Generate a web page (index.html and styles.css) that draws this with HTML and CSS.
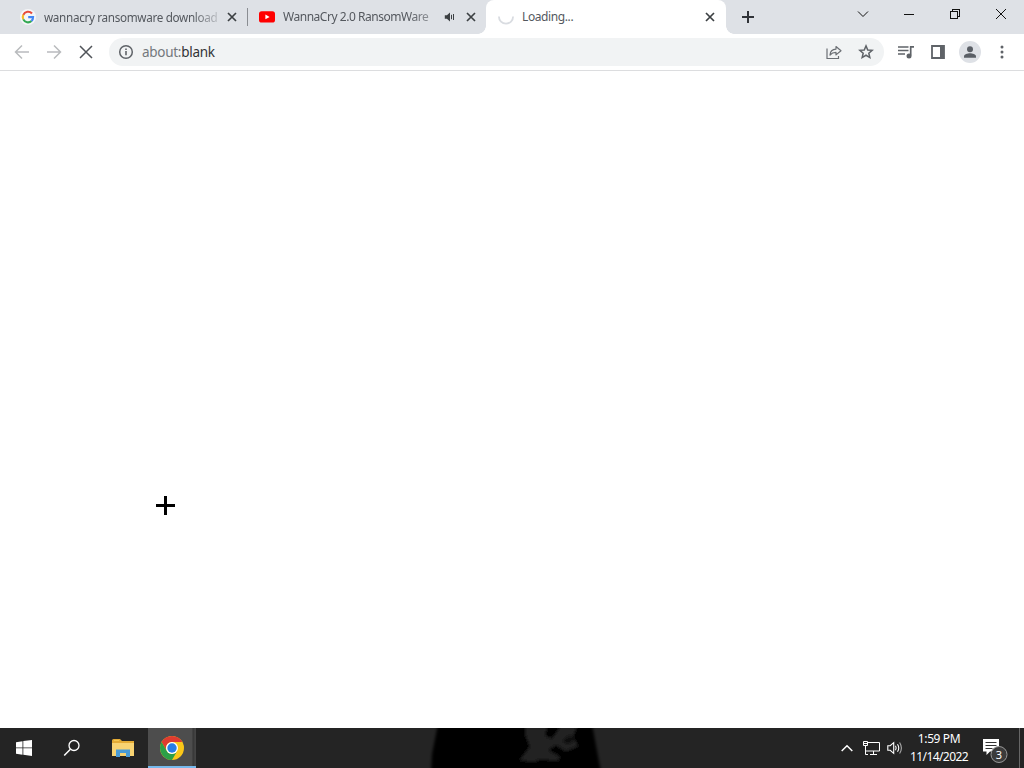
FILE: index.html
```html
<!DOCTYPE html>
<html lang="en">
<head>
<meta charset="utf-8">
<title>about:blank</title>
<link rel="stylesheet" href="styles.css">
</head>
<body>
<div class="desktop">
  <header class="tabstrip">
    <div class="tab">
      <svg class="favicon" viewBox="0 0 16 16"><circle cx="8" cy="8" r="8" fill="#f5f6f8"/><g fill="none" stroke-width="2.1"><path d="M12 4.5A5.2 5.2 0 0 0 3.3 5.8" stroke="#e64a3b"/><path d="M3.3 5.8a5.2 5.2 0 0 0 0 4.6" stroke="#f4b928"/><path d="M3.3 10.4a5.2 5.2 0 0 0 8.2 1.6" stroke="#34a853"/><path d="M11.5 12A5.3 5.3 0 0 0 13.1 8.1H8.2" stroke="#4285f4"/></g></svg>
      <span class="title title-search">wannacry ransomware download</span>
      <svg class="close" viewBox="0 0 10 10"><path d="M1 1l8 8M9 1l-8 8"/></svg>
    </div>
    <div class="tab tab-video">
      <svg class="favicon" viewBox="0 0 16 16"><rect y="2.2" width="16" height="11.4" rx="2.7" fill="#f00"/><path d="M6.4 5.6v4.7l4.2-2.35z" fill="#fff"/></svg>
      <span class="title title-video">WannaCry 2.0 RansomWare</span>
      <svg class="audio" viewBox="0 0 12 12"><path d="M.8 4.2h2.1L6 1.5v9L2.9 7.8H.8z" fill="#3c4043"/><path d="M7.500 3.800v4.400M9.500 3v6" stroke="#3c4043" stroke-width="1" fill="none"/></svg>
      <svg class="close" viewBox="0 0 10 10"><path d="M1 1l8 8M9 1l-8 8"/></svg>
    </div>
    <div class="tab tab-active">
      <svg class="favicon" viewBox="0 0 16 16"><path d="M.9 7.6a7.1 7.1 0 0 0 14.2 0" fill="none" stroke="#d9dce1" stroke-width="1.8"/></svg>
      <span class="title title-loading">Loading...</span>
      <svg class="close" viewBox="0 0 10 10"><path d="M1 1l8 8M9 1l-8 8"/></svg>
    </div>
    <svg class="newtab" viewBox="0 0 14 14"><path d="M7 1v12M1 7h12" stroke="#303338" stroke-width="2"/></svg>
    <div class="controls">
      <svg viewBox="0 0 12 12"><path d="M1 3.500l5 5 5-5"/></svg>
      <svg viewBox="0 0 12 12" shape-rendering="crispEdges"><path d="M1 6.500h10"/></svg>
      <svg viewBox="0 0 12 12" shape-rendering="crispEdges"><path d="M1.500 3.500h7v7h-7zM3.500 3V1.500h7v7H9"/></svg>
      <svg viewBox="0 0 12 12"><path d="M1 1l10 10M11 1L1 11"/></svg>
    </div>
  </header>
  <nav class="toolbar">
    <svg class="nav nav-off" viewBox="0 0 16 16"><path d="M15 8H1.800M8 1.500L1.500 8 8 14.500"/></svg>
    <svg class="nav nav-off" viewBox="0 0 16 16"><path d="M1 8h13.200M8 1.500L14.500 8 8 14.500"/></svg>
    <svg class="nav" viewBox="0 0 16 16"><path d="M2 2l12 12M14 2L2 14"/></svg>
    <div class="omnibox">
      <svg class="info" viewBox="0 0 16 16"><circle cx="8" cy="8" r="6.300" fill="none" stroke="#5f6368" stroke-width="1.500"/><path d="M8 7.100v4.200M8 4.400v1.600" stroke="#5f6368" stroke-width="1.600"/></svg>
      <span class="url"><span class="scheme">about:</span>blank</span>
      <svg class="tool share" viewBox="0 0 16 16"><g fill="none" stroke="#6b6f74" stroke-width="1.200"><path d="M1 4.500v10h11.500V12"/><path d="M4 11c.2-4 2.200-5.800 6-5.900V2.500l5 4.200-5 4.200V8.400C7.300 8.400 5.500 9.200 4 11z" stroke-linejoin="round"/></g></svg>
      <svg class="tool" viewBox="0 0 16 16"><path d="M8 1.900l1.750 4.050 4.400.4-3.330 2.900 1 4.300L8 11.250l-3.820 2.300 1-4.300L1.850 6.350l4.400-.4z" fill="none" stroke="#5f6368" stroke-width="1.500"/></svg>
    </div>
    <svg class="media" viewBox="0 0 18 16"><path d="M1 3h10.500M1 6.500h10.500M1 10h7" stroke="#5f6368" stroke-width="1.600"/><path d="M13.700 11.500V2.800h3.300" fill="none" stroke="#5f6368" stroke-width="1.700"/><circle cx="12" cy="12" r="2.500" fill="#5f6368"/></svg>
    <svg class="panel" viewBox="0 0 14 14"><path d="M1 1h12v12H1z" fill="none" stroke="#5f6368" stroke-width="1.800"/><path d="M9 1h4v12H9z" fill="#5f6368"/></svg>
    <svg class="avatar" viewBox="0 0 22 22"><circle cx="11" cy="11" r="11" fill="#dee1e6"/><circle cx="11" cy="8.200" r="3" fill="#5a5f66"/><path d="M5 16.700v-1.500c0-2 3.600-3 6-3s6 1 6 3v1.500z" fill="#5a5f66"/></svg>
    <svg class="menu" viewBox="0 0 4 16"><g fill="#5f6368"><circle cx="2" cy="3" r="1.500"/><circle cx="2" cy="8" r="1.500"/><circle cx="2" cy="13" r="1.500"/></g></svg>
  </nav>
  <main class="page"></main>
  <footer class="taskbar">
    <svg class="wallpaper" viewBox="0 0 1024 40" aria-hidden="true"><defs><filter id="soft" x="-5%" y="-20%" width="110%" height="140%"><feGaussianBlur stdDeviation="1.500"/></filter></defs><g filter="url(#soft)"><path d="M438-4H592l9 48H431l1-18z" fill="#060606"/><path d="M525-2h22l-2 10 7 3 9-13h16l-4 10 5 10-12 5-10-6-8 5 12 7-3 4-17-2-6 3-14-2 10-13-4-11z" fill="#202020"/><path d="M562 13l8-6 5 5-7 4z" fill="#080808"/></g></svg>
    <div class="launch">
      <svg class="windows" viewBox="0 0 16 16" fill="#fff"><path d="M0 2.200l6.500-1v6.300H0zM7.300 1.100L16 0v7.500H7.300zM0 8.300h6.500v6.400L0 13.800zM7.300 8.300H16V16l-8.700-1.200z"/></svg>
    </div>
    <div class="launch">
      <svg class="search" viewBox="0 0 18 18"><circle cx="11" cy="6.500" r="5" fill="none" stroke="#fff" stroke-width="1.300"/><path d="M7.400 10.200L1.200 16.500" stroke="#fff" stroke-width="1.500"/></svg>
    </div>
    <div class="launch launch-files">
      <svg class="folder" viewBox="0 0 22 18"><path d="M0 1.500Q0 0 1.500 0H8l2 2h12v15H0z" fill="#e4ab35"/><path d="M0 4h22v13H0z" fill="#f8d372"/><path d="M4 10.500h14v7.500h-4v-4H8v4H4z" fill="#4a9bd5"/><path d="M2 1.500h5" stroke="#f5c74e"/></svg>
    </div>
    <div class="launch launch-active">
      <svg class="chrome" viewBox="0 0 24 24"><circle cx="12" cy="12" r="12" fill="#fbc718"/><path d="M1.610 6A12 12 0 0 1 22.390 6H12a6 6 0 0 0-5.200 9z" fill="#df3b30"/><path d="M1.610 6A12 12 0 0 0 12 24l5.200-9A6 6 0 0 1 6.800 15z" fill="#2c9f47"/><circle cx="12" cy="12" r="6" fill="#fff"/><circle cx="12" cy="12" r="4.700" fill="#287de5"/></svg>
    </div>
    <div class="tray">
      <svg class="chevron" viewBox="0 0 12 8"><path d="M.7 7L6 1.700 11.300 7" fill="none" stroke="#fff" stroke-width="1.500"/></svg>
      <svg class="network" viewBox="0 0 18 16"><g fill="none" stroke="#fff" stroke-width="1"><path d="M6 2.500h11.500v8.500H4M11.500 11v3.500M8 14.500h7"/><path d="M1.500 1.500h4v4h-4zM3.500 6v8.500H6M2 3.500h3"/></g></svg>
      <svg class="sound" viewBox="0 0 16 14"><g fill="none" stroke="#fff" stroke-width="1.100"><path d="M.8 4.700h2.400l3.500-3v10.600l-3.500-3H.8z"/><path d="M8.500 4.800q1.300 2.200 0 4.400M10.500 3.200q2.500 3.800 0 7.600"/><path d="M12.600 1.500q3.600 5.500 0 11" stroke="#aaa"/></g></svg>
      <div class="clock"><span class="time">1:59 PM</span><span class="date">11/14/2022</span></div>
      <svg class="notify" viewBox="0 0 26 26"><path d="M1 1h16v12.500H8L4.500 17v-3.500H1z" fill="#fff"/><path d="M3.500 4.500h11M3.500 7.500h11M3.500 10.500h7" stroke="#333"/><circle cx="17" cy="16.500" r="8" fill="#3b3b3b" stroke="#999" stroke-width="1"/><text x="17" y="20.500" text-anchor="middle" class="count">3</text></svg>
    </div>
    <div class="peek"></div>
  </footer>
  <svg class="cursor" viewBox="0 0 19 19" shape-rendering="crispEdges"><path d="M8 0h3v8h8v3h-8v8H8v-8H0V8h8z"/></svg>
</div>
</body>
</html>
```
FILE: styles.css
```css
* { box-sizing: border-box; }
body { margin: 0; font-family: "Noto Sans", "Open Sans", sans-serif; }
svg { display: block; flex: none; }

.desktop {
  position: relative;
  width: 1024px;
  height: 768px;
  overflow: hidden;
  display: flex;
  flex-direction: column;
  background: #fff;
}

.tabstrip {
  flex: none;
  height: 34px;
  display: flex;
  padding-left: 8px;
  background: #dee1e6;
}
.tab {
  width: 240px;
  height: 34px;
  display: flex;
  align-items: center;
  padding: 0 10px 0 12px;
  background: linear-gradient(#8a8d92, #8a8d92) right 8px / 1px 18px no-repeat;
}
.tab-video { width: 238px; padding: 0 9px 0 11px; background: none; }
.tab-active {
  position: relative;
  border-radius: 8px 8px 0 0;
  background: #fff;
}
.tab-active::before, .tab-active::after {
  content: "";
  position: absolute;
  bottom: 0;
  width: 8px;
  height: 8px;
}
.tab-active::before { left: -8px; background: radial-gradient(circle at 0 0, #dee1e6 7.5px, #fff 8px); }
.tab-active::after { right: -8px; background: radial-gradient(circle at 100% 0, #dee1e6 7.5px, #fff 8px); }
.favicon { width: 16px; height: 16px; }
.title {
  margin: 0 auto 0 8px;
  white-space: nowrap;
  font-size: 12px;
  line-height: 18px;
  color: #54585e;
}
.title-search {
  width: 175px;
  font-size: 11.7px;
  letter-spacing: -.32px;
  -webkit-mask-image: linear-gradient(90deg, #000 148px, #0003 175px);
  mask-image: linear-gradient(90deg, #000 148px, #0003 175px);
}
.title-video {
  width: 147px;
  letter-spacing: -.47px;
  -webkit-mask-image: linear-gradient(90deg, #000 125px, #0008 147px);
  mask-image: linear-gradient(90deg, #000 125px, #0008 147px);
}
.title-loading { letter-spacing: -.4px; }
.audio { width: 12px; height: 12px; margin-right: 10px; }
.close { width: 10px; height: 10px; stroke: #3c4043; stroke-width: 1.7; }
.tab .close { margin-right: 1px; }
.newtab { width: 14px; height: 14px; margin: 10px 0 0 15px; }
.controls {
  margin-left: auto;
  height: 28px;
  display: flex;
  align-items: center;
  gap: 34px;
  padding-right: 17px;
}
.controls svg { width: 12px; height: 12px; fill: none; stroke: #111; }

.toolbar {
  flex: none;
  height: 37px;
  display: flex;
  align-items: center;
  padding: 0 20px 0 14px;
  border-bottom: 1px solid #dcdddf;
  background: #fff;
}
.nav { width: 16px; height: 16px; margin-right: 16px; fill: none; stroke: #505459; stroke-width: 1.5; }
.nav-off { stroke: #b9bbbe; }
.omnibox {
  width: 775px;
  height: 28px;
  margin-left: -1px;
  display: flex;
  align-items: center;
  padding: 0 10px 0 9px;
  border-radius: 14px;
  background: #f1f3f4;
}
.info { width: 16px; height: 16px; }
.url { margin: 0 auto 0 8px; font-size: 13.5px; line-height: 20px; letter-spacing: -.28px; color: #303236; }
.scheme { color: #74787d; }
.tool { width: 16px; height: 16px; }
.share { margin-right: 16px; }
.media { width: 18px; height: 16px; margin-left: 13px; }
.panel { width: 14px; height: 14px; margin-left: 16px; }
.avatar { width: 22px; height: 22px; margin-left: 14px; }
.menu { width: 4px; height: 16px; margin-left: 19px; }

.page { flex: 1; background: #fff; }

.taskbar {
  position: relative;
  flex: none;
  height: 40px;
  display: flex;
  background: #242424;
  overflow: hidden;
}
.wallpaper { position: absolute; inset: 0; width: 1024px; height: 40px; }
.launch { width: 48px; height: 40px; display: flex; align-items: center; justify-content: center; }
.launch-files { width: 52px; padding-left: 2px; }
.launch-active {
  background: linear-gradient(90deg, #4d4d4d 44px, #353535 45px, #444 47px);
  border-bottom: 2px solid #76b9ed;
  padding-top: 2px;
}
.windows { width: 16px; height: 16px; }
.search { width: 18px; height: 18px; }
.folder { width: 22px; height: 18px; }
.chrome { width: 24px; height: 24px; }
.tray { position: relative; margin-left: auto; display: flex; align-items: center; }
.chevron { width: 12px; height: 8px; }
.network { width: 18px; height: 16px; margin-left: 9px; }
.sound { width: 16px; height: 14px; margin-left: 7px; }
.clock {
  width: 60px;
  margin-left: 6px;
  display: flex;
  flex-direction: column;
  align-items: center;
  font-size: 12px;
  line-height: 18px;
  color: #fff;
  white-space: nowrap;
}
.time { letter-spacing: -.4px; }
.date { letter-spacing: -.6px; }
.notify { width: 26px; height: 26px; margin: 5px 0 0 13px; }
.count { font-size: 11px; fill: #fff; }
.peek { width: 5px; margin-left: 11px; border-left: 1px solid #666; }

.cursor { position: absolute; left: 156px; top: 496px; width: 19px; height: 19px; }
```
